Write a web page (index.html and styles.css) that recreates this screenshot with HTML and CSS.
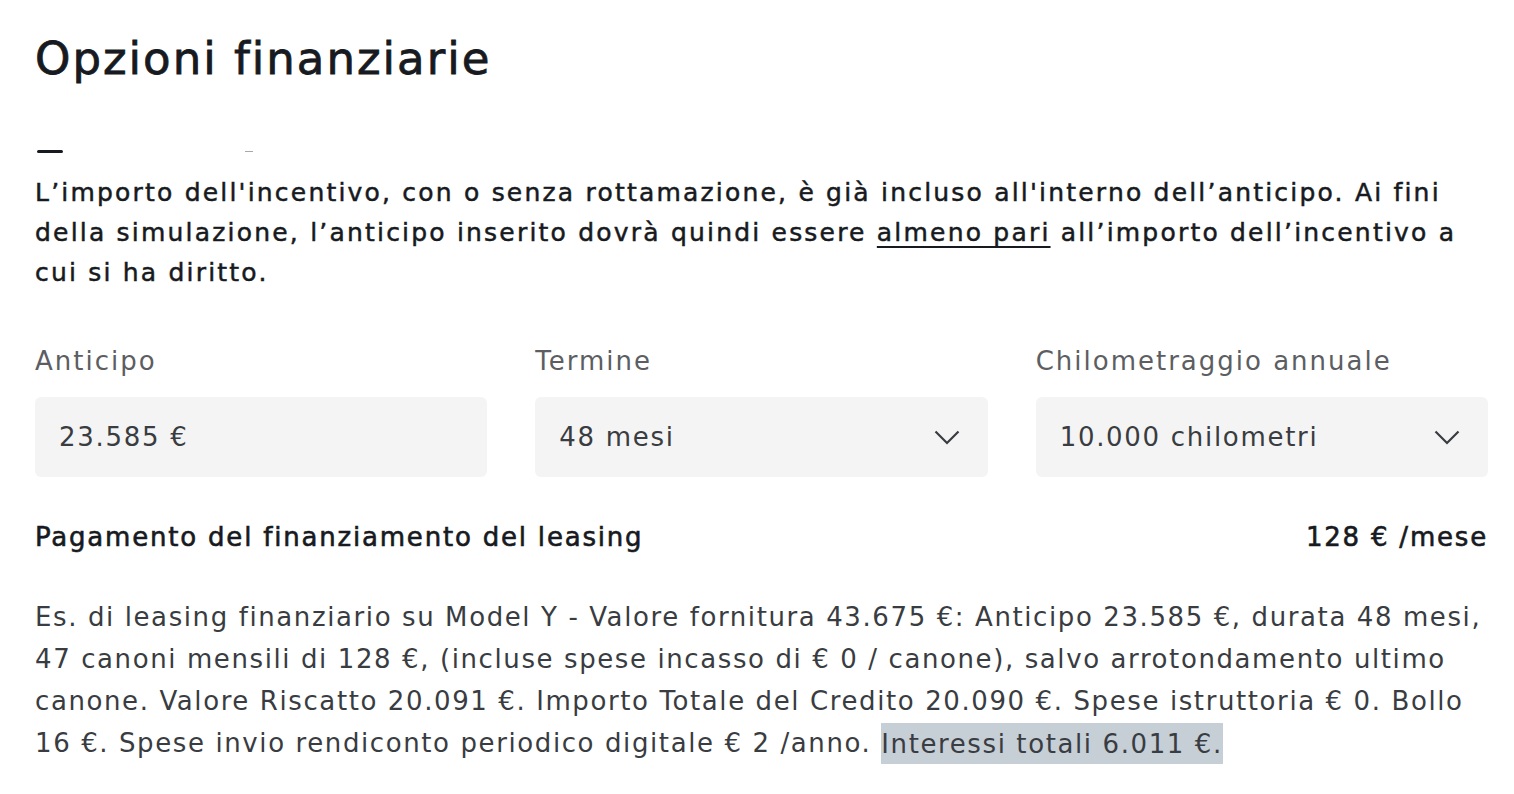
FILE: index.html
```html
<!DOCTYPE html>
<html lang="it">
<head>
    <meta charset="UTF-8">
    <meta name="viewport" content="width=device-width, initial-scale=1.0">
    <title>Opzioni finanziarie</title>
    <link rel="stylesheet" href="styles.css">
</head>
<body>
    <div class="page">
        <h1 class="title">Opzioni finanziarie</h1>

        <!-- bottom edge of the scrolled-away block -->
        <div class="clipped">
            <span class="clip-a"></span>
            <span class="clip-b"></span>
        </div>

        <p class="notice">L’importo dell'incentivo, con o senza rottamazione, è già incluso all'interno dell’anticipo. Ai fini<br>della simulazione, l’anticipo inserito dovrà quindi essere <u>almeno pari</u> all’importo dell’incentivo a<br>cui si ha diritto.</p>

        <div class="fields">
            <div class="field">
                <label class="field-label">Anticipo</label>
                <div class="box">
                    <span class="box-value">23.585 €</span>
                </div>
            </div>
            <div class="field">
                <label class="field-label">Termine</label>
                <div class="box">
                    <span class="box-value">48 mesi</span>
                    <svg class="chevron" width="26" height="15" viewBox="0 0 26 15"><path d="M1.5 1.5 L13 13 L24.5 1.5" fill="none" stroke="#393c41" stroke-width="2.2"/></svg>
                </div>
            </div>
            <div class="field">
                <label class="field-label">Chilometraggio annuale</label>
                <div class="box">
                    <span class="box-value">10.000 chilometri</span>
                    <svg class="chevron" width="26" height="15" viewBox="0 0 26 15"><path d="M1.5 1.5 L13 13 L24.5 1.5" fill="none" stroke="#393c41" stroke-width="2.2"/></svg>
                </div>
            </div>
        </div>

        <div class="payment">
            <span>Pagamento del finanziamento del leasing</span>
            <span>128 € /mese</span>
        </div>

        <p class="disclaimer">Es. di leasing finanziario su Model Y - Valore fornitura 43.675 €: Anticipo 23.585 €, durata 48 mesi,<br>47 canoni mensili di 128 €, (incluse spese incasso di € 0 / canone), salvo arrotondamento ultimo<br>canone. Valore Riscatto 20.091 €. Importo Totale del Credito 20.090 €. Spese istruttoria € 0. Bollo<br>16 €. Spese invio rendiconto periodico digitale € 2 /anno. <span class="mark">Interessi totali 6.011 €.</span></p>
    </div>
</body>
</html>
```

FILE: styles.css
```css
body {
    margin: 0;
    background: #ffffff;
    font-family: "DejaVu Sans", "Noto Sans", sans-serif;
    color: #171a20;
}

.page {
    width: 1453px;
    padding: 33px 0 0 35px;
}

.title {
    margin: 0;
    font-size: 45px;
    line-height: 52px;
    font-weight: normal;
    letter-spacing: 2px;
    -webkit-text-stroke: 0.8px #171a20;
}

.clipped {
    height: 3px;
    margin-top: 65px;
    position: relative;
}
.clip-a {
    position: absolute;
    left: 2px;
    top: 0;
    width: 26px;
    height: 3px;
    background: #171a20;
    border-radius: 2px;
}
.clip-b {
    position: absolute;
    left: 210px;
    top: 1px;
    width: 8px;
    height: 1px;
    background: #a8a8a8;
}

.notice {
    margin: 20px 0 0;
    font-size: 25px;
    line-height: 40px;
    letter-spacing: 2.2px;
    white-space: nowrap;
    -webkit-text-stroke: 0.5px #171a20;
}
.notice u {
    text-underline-offset: 5px;
    text-decoration-thickness: 2px;
}

.fields {
    display: grid;
    grid-template-columns: repeat(3, 1fr);
    gap: 48px;
    margin-top: 53px;
}
.field-label {
    display: block;
    font-size: 26px;
    line-height: 30px;
    color: #5c5e62;
    letter-spacing: 2px;
}
.box {
    margin-top: 21px;
    height: 80px;
    background: #f4f4f4;
    border-radius: 6px;
    display: flex;
    align-items: center;
    justify-content: space-between;
    padding: 0 28px 0 24px;
    box-sizing: border-box;
}
.box-value {
    font-size: 26px;
    color: #393c41;
    letter-spacing: 1.7px;
}

.payment {
    display: flex;
    justify-content: space-between;
    margin-top: 45px;
    font-size: 26px;
    line-height: 30px;
    letter-spacing: 1.8px;
    -webkit-text-stroke: 0.6px #171a20;
}

.disclaimer {
    margin: 44px 0 0;
    font-size: 26px;
    line-height: 42px;
    color: #393c41;
    letter-spacing: 1.6px;
    white-space: nowrap;
}
.mark {
    background: #c6ced6;
    padding: 5.5px 0;
}
```
